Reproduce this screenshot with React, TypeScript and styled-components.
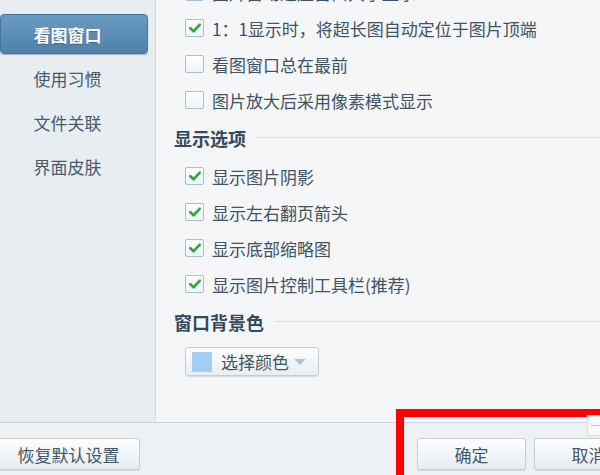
import React from "react";
import styled, { createGlobalStyle } from "styled-components";

const GlobalStyle = createGlobalStyle`
  html, body {
    margin: 0;
    padding: 0;
    background: #f4f6f8;
  }
  body {
    font-family: "Noto Sans CJK SC", "Noto Sans", sans-serif;
  }
`;

const Window = styled.div`
  position: relative;
  width: 600px;
  height: 475px;
  overflow: hidden;
  display: flex;
  flex-direction: column;
  background: #f4f6f8;
  color: #415264;
  font-size: 17px;
`;

const Body = styled.div`
  display: flex;
  height: 422px;
  flex-shrink: 0;
`;

const Sidebar = styled.nav`
  width: 156px;
  flex-shrink: 0;
  box-sizing: border-box;
  border-right: 1px solid #d3dce4;
  background: #e8edf2;
  padding: 14px 7px 0 0;
  display: flex;
  flex-direction: column;
  gap: 4px;
`;

const NavItem = styled.div<{ $active?: boolean }>`
  height: 40px;
  box-sizing: border-box;
  display: flex;
  align-items: center;
  justify-content: center;
  padding-right: 13px;
  border-radius: 4px;
  color: ${(p) => (p.$active ? "#ffffff" : "#485a6b")};
  font-weight: ${(p) => (p.$active ? 700 : 400)};
  background: ${(p) =>
    p.$active ? "linear-gradient(#6a9bc3, #4f80a8)" : "transparent"};
  border: 1px solid ${(p) => (p.$active ? "#46759c" : "transparent")};
  box-shadow: ${(p) => (p.$active ? "0 1px 1px rgba(40, 70, 100, 0.35)" : "none")};
  text-shadow: ${(p) => (p.$active ? "0 1px 1px rgba(30, 60, 90, 0.4)" : "none")};
`;

const Content = styled.main`
  flex: 1;
  padding-left: 18px;
  overflow: hidden;
`;

const OptionList = styled.div<{ $first?: boolean }>`
  display: flex;
  flex-direction: column;
  padding-left: 11px;
  margin-top: ${(p) => (p.$first ? "-26px" : "0")};
`;

const OptionRow = styled.label`
  height: 36px;
  display: flex;
  align-items: center;
  gap: 8px;
  white-space: nowrap;
`;

const Box = styled.span`
  width: 19px;
  height: 18px;
  box-sizing: border-box;
  flex-shrink: 0;
  border: 1px solid #a9bfd6;
  border-radius: 2px;
  background: linear-gradient(#ffffff, #eef3f8);
  display: flex;
  align-items: center;
  justify-content: center;
`;

const SectionTitle = styled.div`
  height: 40px;
  display: flex;
  align-items: center;
  gap: 10px;
  font-size: 18px;
  font-weight: 700;
  color: #34495c;
  &::after {
    content: "";
    flex: 1;
    height: 1px;
    margin-top: -2px;
    background: #d6dfe7;
  }
`;

const ColorButton = styled.div`
  margin: 5px 0 0 11px;
  width: 134px;
  height: 29px;
  box-sizing: border-box;
  display: flex;
  align-items: center;
  padding: 0 12px 0 6px;
  border: 1px solid #c2cfdb;
  border-radius: 3px;
  background: linear-gradient(#fcfdfe, #e8eef3);
  box-shadow: 0 1px 1px rgba(120, 140, 160, 0.25);
  color: #455667;
`;

const Swatch = styled.span`
  width: 20px;
  height: 20px;
  background: #a4cdf6;
  margin-right: 9px;
  flex-shrink: 0;
`;

const Caret = styled.span`
  margin-left: auto;
  width: 0;
  height: 0;
  border-left: 6px solid transparent;
  border-right: 6px solid transparent;
  border-top: 6px solid #a9c3da;
`;

const Footer = styled.footer`
  flex: 1;
  box-sizing: border-box;
  border-top: 1px solid #cdd6df;
  background: #eef1f4;
  display: flex;
  align-items: flex-start;
  padding-top: 15px;
`;

const Button = styled.button<{ $width: number }>`
  flex-shrink: 0;
  width: ${(p) => p.$width}px;
  height: 32px;
  border: 1px solid #c4cfd9;
  border-radius: 3px;
  background: linear-gradient(#fdfeff, #e8edf1);
  box-shadow: 0 1px 1px rgba(120, 140, 160, 0.25);
  font-family: inherit;
  font-size: 17px;
  color: #455667;
  padding: 0;
`;

const LeftButtons = styled.div`
  display: flex;
  margin-left: -3px;
`;

const RightButtons = styled.div`
  display: flex;
  gap: 8px;
  margin-left: 277px;
`;

const Highlight = styled.div`
  position: absolute;
  left: 396px;
  top: 409px;
  width: 260px;
  height: 120px;
  box-sizing: border-box;
  border: 8px solid #ff0000;
  pointer-events: none;
`;

const Grip = styled.div`
  position: absolute;
  left: 587px;
  top: 415px;
  width: 16px;
  height: 21px;
  box-sizing: border-box;
  border: 1px solid #d7dee5;
  background: #f7f9fb;
  &::after {
    content: "";
    position: absolute;
    left: 3px;
    right: 0;
    top: 9px;
    height: 1px;
    background: #b9c4cf;
  }
`;

const Check = () => (
  <svg width="14" height="14" viewBox="0 0 14 14">
    <path
      d="M2.3 7.2 L5.6 10.3 L11.8 3.6"
      fill="none"
      stroke="#2aa83a"
      strokeWidth="2.6"
      strokeLinecap="round"
      strokeLinejoin="round"
    />
  </svg>
);

const Option = ({ checked, label }: { checked?: boolean; label: string }) => (
  <OptionRow>
    <Box>{checked && <Check />}</Box>
    <span>{label}</span>
  </OptionRow>
);

const navItems = ["看图窗口", "使用习惯", "文件关联", "界面皮肤"];

const App = () => {
  return (
    <>
      <GlobalStyle />
      <Window>
        <Body>
          <Sidebar>
            {navItems.map((item, i) => (
              <NavItem key={item} $active={i === 0}>
                {item}
              </NavItem>
            ))}
          </Sidebar>
          <Content>
            <OptionList $first>
              <Option checked label="图片自动适应窗口大小显示" />
              <Option checked label="1：1显示时，将超长图自动定位于图片顶端" />
              <Option label="看图窗口总在最前" />
              <Option label="图片放大后采用像素模式显示" />
            </OptionList>
            <SectionTitle>显示选项</SectionTitle>
            <OptionList>
              <Option checked label="显示图片阴影" />
              <Option checked label="显示左右翻页箭头" />
              <Option checked label="显示底部缩略图" />
              <Option checked label="显示图片控制工具栏(推荐)" />
            </OptionList>
            <SectionTitle>窗口背景色</SectionTitle>
            <ColorButton>
              <Swatch />
              选择颜色
              <Caret />
            </ColorButton>
          </Content>
        </Body>
        <Footer>
          <LeftButtons>
            <Button $width={143}>恢复默认设置</Button>
          </LeftButtons>
          <RightButtons>
            <Button $width={109}>确定</Button>
            <Button $width={109}>取消</Button>
          </RightButtons>
        </Footer>
        <Highlight />
        <Grip />
      </Window>
    </>
  );
};

export default App;
